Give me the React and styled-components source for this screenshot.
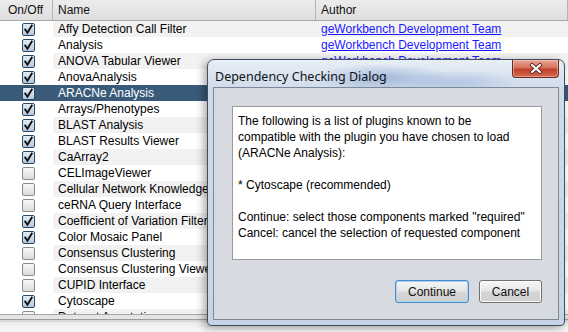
import React from "react";
import styled, { createGlobalStyle } from "styled-components";

const plugins = [
  { name: "Affy Detection Call Filter", on: true, author: "geWorkbench Development Team" },
  { name: "Analysis", on: true, author: "geWorkbench Development Team" },
  { name: "ANOVA Tabular Viewer", on: true, author: "geWorkbench Development Team" },
  { name: "AnovaAnalysis", on: true },
  { name: "ARACNe Analysis", on: true, selected: true },
  { name: "Arrays/Phenotypes", on: true },
  { name: "BLAST Analysis", on: true },
  { name: "BLAST Results Viewer", on: true },
  { name: "CaArray2", on: true },
  { name: "CELImageViewer", on: false },
  { name: "Cellular Network Knowledge Base", on: false },
  { name: "ceRNA Query Interface", on: false },
  { name: "Coefficient of Variation Filter", on: true },
  { name: "Color Mosaic Panel", on: true },
  { name: "Consensus Clustering", on: false },
  { name: "Consensus Clustering Viewer", on: false },
  { name: "CUPID Interface", on: false },
  { name: "Cytoscape", on: true },
  { name: "Dataset Annotation", on: false },
];

const Global = createGlobalStyle`
  html, body {
    margin: 0;
    padding: 0;
    background: #ffffff;
  }
  body {
    font-family: "Liberation Sans", Arial, sans-serif;
    font-size: 12px;
    color: #000;
  }
`;

const Screen = styled.div`
  position: relative;
  width: 568px;
  height: 332px;
  overflow: hidden;
  background: #fff;
  display: flex;
  flex-direction: column;
`;

const Table = styled.div`
  display: flex;
  flex-direction: column;
  height: 314px;
  border-bottom: 1px solid #a7a7a7;
`;

const HeaderRow = styled.div`
  display: grid;
  grid-template-columns: 53px 263px 1fr;
  height: 20px;
  background: linear-gradient(#ececec, #dedede);
  border-bottom: 1px solid #a9a9a9;
`;

const HeadCell = styled.div`
  display: flex;
  align-items: center;
  padding-left: ${(p) => p.$pad || 5}px;
  border-right: 1px solid #b4b4b4;
  color: #111;
`;

const Body = styled.div`
  flex: 1;
  overflow: hidden;
`;

const Row = styled.div`
  display: grid;
  grid-template-columns: 53px 263px 1fr;
  height: 16px;
  background: ${(p) => (p.$selected ? "#3a5a7a" : "transparent")};
  color: ${(p) => (p.$selected ? "#fff" : "#000")};
`;

const Cell = styled.div`
  display: flex;
  align-items: center;
  padding-left: 5px;
  white-space: nowrap;
  overflow: hidden;
  background: ${(p) => (p.$stripe ? "#f2f2f2" : "transparent")};
`;

const CheckCell = styled.div`
  display: flex;
  align-items: center;
  padding-left: 22px;
`;

const Box = styled.span`
  width: 11px;
  height: 11px;
  border: 1px solid ${(p) => (p.$on ? "#2c4966" : "#8c8c8c")};
  border-radius: 2px;
  background: ${(p) =>
    p.$on
      ? "linear-gradient(#e7eef5, #b6c8da)"
      : "linear-gradient(#f7f7f7, #dcdcdc)"};
  display: flex;
  align-items: center;
  justify-content: center;
`;

const Link = styled.span`
  color: #1a1aff;
  text-decoration: underline;
`;

const Footer = styled.div`
  height: 4px;
  background: #e4e4e4;
  border-bottom: 1px solid #9c9c9c;
`;

const StatusBar = styled.div`
  flex: 1;
  background: linear-gradient(#ececec, #f8f8f8);
  border-top: 2px solid #d8d8d8;
`;

const Dialog = styled.div`
  position: absolute;
  left: 207px;
  top: 59px;
  width: 358px;
  height: 267px;
  box-sizing: border-box;
  border: 1px solid #3f4d5c;
  border-radius: 7px 7px 4px 4px;
  background:
    radial-gradient(ellipse 70px 14px at 175px 18px, rgba(120, 150, 200, 0.55), transparent),
    radial-gradient(ellipse 60px 12px at 250px 22px, rgba(140, 165, 210, 0.45), transparent),
    linear-gradient(#e7eef7, #cddbeb 30px, #c6d5e6);
  box-shadow: -3px 2px 8px rgba(0, 0, 0, 0.35);
  display: flex;
  flex-direction: column;
  padding: 0 5px 5px 5px;
`;

const TitleBar = styled.div`
  height: 27px;
  display: flex;
  align-items: flex-start;
  justify-content: space-between;
`;

const Title = styled.div`
  font-family: "Noto Sans", "Open Sans", sans-serif;
  font-size: 12.5px;
  color: #111;
  padding: 8px 0 0 2px;
`;

const CloseButton = styled.div`
  width: 45px;
  height: 17px;
  border: 1px solid #6a2b22;
  border-top: none;
  border-radius: 0 0 4px 4px;
  background: linear-gradient(#eaa898, #d8705a 45%, #c1412b 55%, #d66a4f);
  display: flex;
  align-items: center;
  justify-content: center;
  box-shadow: inset 0 0 0 1px rgba(255, 220, 210, 0.45);
`;

const Client = styled.div`
  flex: 1;
  background: #d7dae0;
  border: 1px solid #7c8896;
  display: flex;
  flex-direction: column;
`;

const Message = styled.div`
  margin: 18px 16px 0 18px;
  background: #fff;
  border: 1px solid #9a9a9a;
  padding: 6px 5px;
  line-height: 16px;
  white-space: pre;
  box-sizing: border-box;
  height: 154px;
`;

const Buttons = styled.div`
  display: flex;
  justify-content: flex-end;
  gap: 10px;
  margin: 20px 16px 0 0;
`;

const Button = styled.div`
  width: ${(p) => p.$w}px;
  height: 23px;
  box-sizing: border-box;
  border: 1px solid ${(p) => (p.$focus ? "#4a8bc7" : "#707070")};
  border-radius: 3px;
  background: linear-gradient(#f6f6f6, #e6e6e6 48%, #d6d6d6 52%, #cfcfcf);
  box-shadow: ${(p) =>
    p.$focus ? "inset 0 0 0 1px #a9d4f3" : "inset 0 0 0 1px #fbfbfb"};
  display: flex;
  align-items: center;
  justify-content: center;
  color: #111;
`;

const Check = () => (
  <svg width="11" height="11" viewBox="0 0 11 11">
    <path d="M2.2 5.6 L4.4 8.8 L8.8 1.6" fill="none" stroke="#111" strokeWidth="1.9" strokeLinecap="square" />
  </svg>
);

const CloseGlyph = () => (
  <svg width="14" height="11" viewBox="0 0 14 11">
    <path d="M3 2 L11 9 M11 2 L3 9" stroke="#5a2a22" strokeWidth="4" strokeLinecap="round" />
    <path d="M3 2 L11 9 M11 2 L3 9" stroke="#fff" strokeWidth="2.2" strokeLinecap="round" />
  </svg>
);

const message = `The following is a list of plugins known to be
compatible with the plugin you have chosen to load
(ARACNe Analysis):

* Cytoscape (recommended)

Continue: select those components marked "required"
Cancel: cancel the selection of requested component`;

const App = () => {
  return (
    <Screen>
      <Global />
      <Table>
        <HeaderRow>
          <HeadCell $pad={8}>On/Off</HeadCell>
          <HeadCell>Name</HeadCell>
          <HeadCell>Author</HeadCell>
        </HeaderRow>
        <Body>
          {plugins.map((p, i) => {
            const stripe = i % 2 === 0 && !p.selected;
            return (
              <Row key={p.name} $selected={p.selected}>
                <CheckCell>
                  <Box $on={p.on}>{p.on && <Check />}</Box>
                </CheckCell>
                <Cell $stripe={stripe}>{p.name}</Cell>
                <Cell $stripe={stripe}>{p.author && <Link>{p.author}</Link>}</Cell>
              </Row>
            );
          })}
        </Body>
      </Table>
      <Footer />
      <StatusBar />
      <Dialog>
        <TitleBar>
          <Title>Dependency Checking Dialog</Title>
          <CloseButton>
            <CloseGlyph />
          </CloseButton>
        </TitleBar>
        <Client>
          <Message>{message}</Message>
          <Buttons>
            <Button $w={74} $focus>Continue</Button>
            <Button $w={63}>Cancel</Button>
          </Buttons>
        </Client>
      </Dialog>
    </Screen>
  );
};

export default App;
